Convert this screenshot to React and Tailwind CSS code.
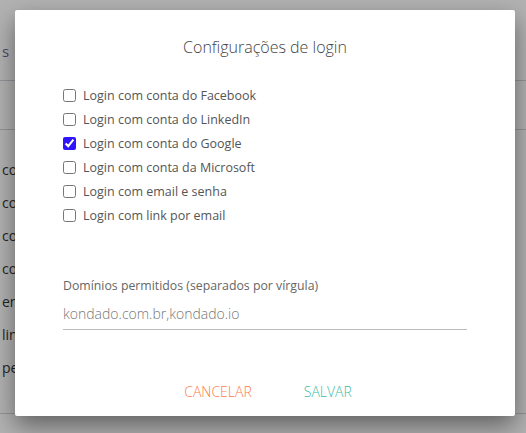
import React, { useState } from 'react';

const options = [
  { id: 'facebook', label: 'Login com conta do Facebook' },
  { id: 'linkedin', label: 'Login com conta do LinkedIn' },
  { id: 'google', label: 'Login com conta do Google' },
  { id: 'microsoft', label: 'Login com conta da Microsoft' },
  { id: 'email', label: 'Login com email e senha' },
  { id: 'link', label: 'Login com link por email' },
];

const bgRows = ['co', 'co', 'co', 'co', 'en', 'lin', 'per'];

const App = () => {
  const [checked, setChecked] = useState({ google: true });
  const [domains, setDomains] = useState('kondado.com.br,kondado.io');

  return (
    <div
      className="relative w-[526px] h-[433px] overflow-hidden bg-white"
      style={{ fontFamily: '"Open Sans", sans-serif' }}
    >
      {/* page behind the dialog */}
      <div className="flex flex-col">
        <div className="h-[81px] border-b border-gray-300 pt-[40px] pl-[2px] text-[15px] text-[#6b6b9b]">s</div>
        <div className="h-[49px] border-b border-gray-300" />
        <div className="flex flex-col gap-[14px] pt-[30px] pl-[2px] text-[14px] text-[#333]">
          {bgRows.map((t, i) => (
            <div key={i} className="h-[19px] leading-[19px]">{t}</div>
          ))}
        </div>
        <div className="mt-[36px] border-b border-gray-300" />
      </div>

      {/* overlay */}
      <div className="absolute inset-0 bg-black/30" />

      {/* dialog */}
      <div className="absolute left-[15px] top-[10px] w-[500px] h-[406px] bg-white rounded-[2px] shadow-[0_10px_25px_rgba(0,0,0,0.45)] flex flex-col">
        <h2 className="text-center text-[16px] font-light text-[#444] mt-[26px] leading-[22px]">
          Configurações de login
        </h2>

        <div className="flex flex-col gap-[5px] mt-[28px] pl-[48px]">
          {options.map((o) => (
            <label key={o.id} className="flex items-center h-[19px] text-[12.5px] text-[#555] leading-[19px]">
              <input
                type="checkbox"
                className="w-[13px] h-[13px] m-0 accent-[#2f14ff]"
                checked={!!checked[o.id]}
                onChange={(e) => setChecked({ ...checked, [o.id]: e.target.checked })}
              />
              <span className="ml-[7px]">{o.label}</span>
            </label>
          ))}
        </div>

        <div className="mt-[52px] px-[48px]">
          <div className="text-[12.3px] text-[#666] leading-[18px]">Domínios permitidos (separados por vírgula)</div>
          <input
            className="mt-[9px] w-[404px] h-[26px] text-[14px] font-light text-[#777] border-b border-[#bbb] outline-none pb-[6px]"
            value={domains}
            onChange={(e) => setDomains(e.target.value)}
          />
        </div>

        <div className="flex justify-center gap-[52px] mt-[51px] pl-[6px] text-[14px] font-light">
          <button className="text-[#ff7b4a]">CANCELAR</button>
          <button className="text-[#3dbba3]">SALVAR</button>
        </div>
      </div>
    </div>
  );
};

export default App;
